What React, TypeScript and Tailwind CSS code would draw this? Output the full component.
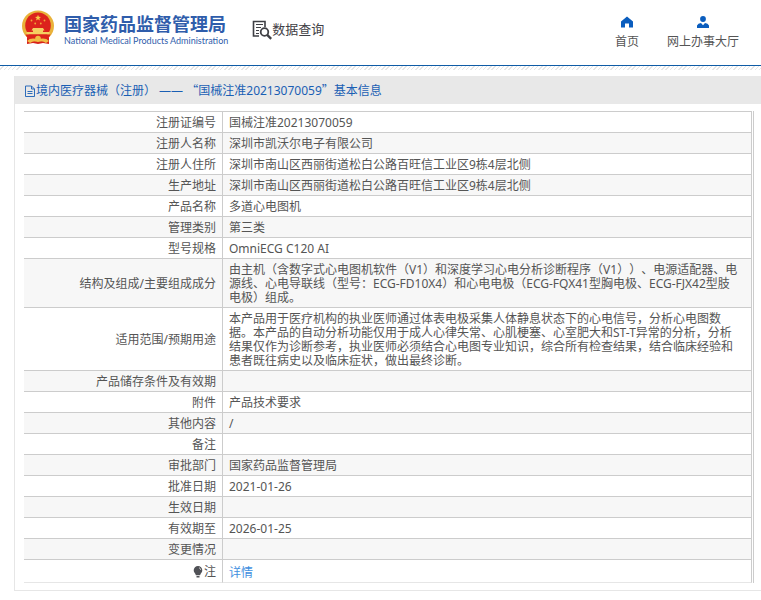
import type { ReactNode } from "react";

type Row = { label: string; value: ReactNode };

const rows: Row[] = [
  { label: "注册证编号", value: "国械注准20213070059" },
  { label: "注册人名称", value: "深圳市凯沃尔电子有限公司" },
  { label: "注册人住所", value: "深圳市南山区西丽街道松白公路百旺信工业区9栋4层北侧" },
  { label: "生产地址", value: "深圳市南山区西丽街道松白公路百旺信工业区9栋4层北侧" },
  { label: "产品名称", value: "多道心电图机" },
  { label: "管理类别", value: "第三类" },
  { label: "型号规格", value: "OmniECG C120 AI" },
  {
    label: "结构及组成/主要组成成分",
    value:
      "由主机（含数字式心电图机软件（V1）和深度学习心电分析诊断程序（V1））、电源适配器、电\n源线、心电导联线（型号：ECG-FD10X4）和心电电极（ECG-FQX41型胸电极、ECG-FJX42型肢\n电极）组成。",
  },
  {
    label: "适用范围/预期用途",
    value:
      "本产品用于医疗机构的执业医师通过体表电极采集人体静息状态下的心电信号，分析心电图数\n据。本产品的自动分析功能仅用于成人心律失常、心肌梗塞、心室肥大和ST-T异常的分析，分析\n结果仅作为诊断参考，执业医师必须结合心电图专业知识，综合所有检查结果，结合临床经验和\n患者既往病史以及临床症状，做出最终诊断。",
  },
  { label: "产品储存条件及有效期", value: "" },
  { label: "附件", value: "产品技术要求" },
  { label: "其他内容", value: "/" },
  { label: "备注", value: "" },
  { label: "审批部门", value: "国家药品监督管理局" },
  { label: "批准日期", value: "2021-01-26" },
  { label: "生效日期", value: "" },
  { label: "有效期至", value: "2026-01-25" },
  { label: "变更情况", value: "" },
];

function Emblem() {
  return (
    <svg viewBox="0 0 32 36" className="h-9 w-8 shrink-0" aria-hidden="true">
      <path d="M5 24 L27 24 L27 34 L21 33 L16 34 L11 33 L5 34 Z" fill="#d8221b" />
      <ellipse cx="16" cy="16" rx="16" ry="15.500" fill="#e9b23a" />
      <ellipse cx="16" cy="15.500" rx="12.800" ry="13" fill="#dc231c" />
      <path d="M16 4.800l.8 2 2.200.1-1.700 1.400.6 2.100-1.900-1.200-1.900 1.200.6-2.100-1.700-1.400 2.200-.1z" fill="#f7cd4a" />
      <g fill="#efa838">
        <circle cx="9.500" cy="10.500" r=".9" />
        <circle cx="22.500" cy="10.500" r=".9" />
        <circle cx="13.200" cy="13.500" r=".9" />
        <circle cx="18.800" cy="13.500" r=".9" />
      </g>
      <path d="M11 18h10l1.500 2.500H21V22h6.500v2.500h-23V22H11v-1.500H9.500z" fill="#f5cf62" />
      <path d="M3.500 24.500h25L26 29H6z" fill="#dc231c" />
      <path d="M5 31Q9 27 16 29.500Q23 27 27 31L24 33Q20 30 16 32Q12 30 8 33z" fill="#f0bd45" />
      <circle cx="16" cy="28.500" r="2.800" fill="#f0bd45" />
    </svg>
  );
}

function SearchDocIcon() {
  return (
    <svg viewBox="0 0 20 20" className="size-5 shrink-0" fill="none" stroke="#3f4045" aria-hidden="true">
      <path d="M7 16H1.500V1.500H13V7" strokeWidth="1.600" />
      <path d="M4 4.500h7M4 7.500h5M4 10.500h3M4 13.500h3" strokeWidth="1.200" />
      <circle cx="12.500" cy="12" r="3.800" strokeWidth="1.800" />
      <path d="M15.200 14.800l4 4" strokeWidth="2.400" />
    </svg>
  );
}

function HomeIcon() {
  return (
    <svg viewBox="0 0 12 12" className="size-3" fill="#0a5dbe" aria-hidden="true">
      <path d="M6 0.500L12 5.500V11.500H8V7.500H4V11.500H0V5.500z" />
    </svg>
  );
}

function UserIcon() {
  return (
    <svg viewBox="0 0 12 12" className="size-3" fill="#0a5dbe" aria-hidden="true">
      <circle cx="6" cy="3" r="2.900" />
      <path d="M0 12V9.500Q1 7 4 7L6 9.200L8 7Q11 7 12 9.500V12z" />
    </svg>
  );
}

function FileIcon() {
  return (
    <svg viewBox="0 0 11 12" className="h-3 w-[11px] shrink-0" fill="none" stroke="#1a5fb4" strokeWidth=".9" aria-hidden="true">
      <path d="M.5 1h6l3 3v7.500h-9zM6.500 1v3h3M2.500 6.500h5M2.500 8.500h5" />
    </svg>
  );
}

function BulbIcon() {
  return (
    <svg viewBox="0 0 12 12" className="size-3" fill="#505156" aria-hidden="true">
      <path d="M6 0a4.300 4.300 0 0 1 4.300 4.300c0 2.200-1.600 2.900-2.200 4.900H3.900C3.300 7.200 1.700 6.500 1.700 4.300A4.300 4.300 0 0 1 6 0z" />
      <path d="M4.500 10h3v1.500h-3z" />
      <path d="M7 1.700q1.500.5 1.700 2.200" fill="none" stroke="#fff" strokeWidth=".7" />
    </svg>
  );
}

const labelCell = "w-[199px] border-r border-[#ccc] px-1.5 text-right font-normal";
const valueCell = "whitespace-pre-line border-r border-[#ccc] pl-1.5";

export default function App() {
  return (
    <div className="bg-white font-['Noto_Sans','Noto_Sans_CJK_SC',sans-serif] text-xs text-[#555] [text-spacing-trim:space-all]">
      <header>
        <div className="flex h-[65px] items-start justify-between px-[22px]">
          <div className="flex items-start">
            <div className="flex gap-2.5 pt-2.5">
              <Emblem />
              <div className="whitespace-nowrap pt-1 text-[#2f5dab]">
                <h1 className="text-lg/5 font-bold">国家药品监督管理局</h1>
                <p className="font-['Lato',sans-serif] text-[9px]/[14px]">
                  National Medical Products Administration
                </p>
              </div>
            </div>
            <div className="flex pl-6 pt-5">
              <SearchDocIcon />
              <span className="whitespace-nowrap text-[13px]/[18px] text-[#3f4045]">数据查询</span>
            </div>
          </div>
          <nav className="flex gap-7 whitespace-nowrap pt-4">
            <a href="#home" className="flex flex-col items-center gap-[5px]">
              <HomeIcon />
              <span className="leading-[18px]">首页</span>
            </a>
            <a href="#hall" className="flex flex-col items-center gap-[5px]">
              <UserIcon />
              <span className="leading-[18px]">网上办事大厅</span>
            </a>
          </nav>
        </div>
        <div className="h-px bg-[#0f5ca6]" />
        <div className="h-1 bg-[repeating-linear-gradient(135deg,#fff_0_2px,#e6e6e6_2px_3px)]" />
      </header>

      <main className="ml-[14px] mt-1.5 border-b border-l border-[#e6e6e6]">
        <h2 className="flex h-7 items-center bg-[#e8e8e8] pl-2.5 pt-px text-[#1a5fb4]">
          <FileIcon />
          <span>
            境内医疗器械（注册） ——{" "}
            <span className="font-['Noto_Sans_CJK_SC',sans-serif]">“</span>
            国械注准20213070059
            <span className="font-['Noto_Sans_CJK_SC',sans-serif]">”</span>
            基本信息
          </span>
        </h2>
        <div className="pb-[7px] pl-[9px] pr-[7px] pt-[7px]">
          <div className="border-r border-[#ccc] pr-px">
            <table className="w-full border-separate border-spacing-0 leading-[14px]">
              <tbody>
                {rows.map((row) => (
                  <tr key={row.label} className="h-[21px] even:bg-[#f7f7f7]">
                    <th scope="row" className={`${labelCell} border-t pb-0.5 pt-1`}>
                      {row.label}
                    </th>
                    <td className={`${valueCell} border-t pb-0.5 pt-1`}>{row.value}</td>
                  </tr>
                ))}
                <tr className="h-6">
                  <th scope="row" className={`${labelCell} border-y border-b-[#e6e6e6] pt-1`}>
                    <span className="inline-flex items-center">
                      <BulbIcon />
                      <span>注</span>
                    </span>
                  </th>
                  <td className={`${valueCell} border-y border-b-[#e6e6e6] pt-1`}>
                    <a href="#detail" className="text-[#3f8fe0]">
                      详情
                    </a>
                  </td>
                </tr>
              </tbody>
            </table>
          </div>
        </div>
      </main>
    </div>
  );
}
